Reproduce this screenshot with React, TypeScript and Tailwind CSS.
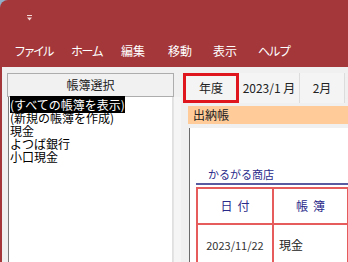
import React from 'react';

const jp = { fontFamily: '"Noto Sans CJK JP", "Noto Sans", sans-serif' };

const menus = [
  { label: 'ファイル', cls: 'w-[57px] tracking-[-2.5px]' },
  { label: 'ホーム', cls: 'w-[50px] tracking-[-1.5px]' },
  { label: '編集', cls: 'w-[47px]' },
  { label: '移動', cls: 'w-[45px]' },
  { label: '表示', cls: 'w-[45px]' },
  { label: 'ヘルプ', cls: 'w-[50px] tracking-[-1.5px]' },
];

const books = ['(すべての帳簿を表示)', '(新規の帳簿を作成)', '現金', 'よつば銀行', '小口現金'];

export default function App() {
  return (
    <div className="w-[348px] h-[262px] overflow-hidden bg-[#8fb0c8]" style={jp}>
      <div className="h-full rounded-tl-[8px] bg-[#a4373a] flex flex-col">
        {/* Title bar */}
        <div className="h-[36px] pl-[26px] pt-[15px]">
          <svg width="7" height="6" viewBox="0 0 7 6">
            <rect x="1" y="0" width="5" height="1" fill="#f3d6d6" />
            <path d="M1 2.5 L6 2.5 L3.5 5.5 Z" fill="#f3d6d6" />
          </svg>
        </div>

        {/* Menu bar */}
        <div className="h-[31px] flex items-center pl-[14px] pb-[1px] text-[12px] text-white">
          {menus.map((m) => (
            <span key={m.label} className={`${m.cls} whitespace-nowrap`}>
              {m.label}
            </span>
          ))}
        </div>

        {/* Body */}
        <div className="flex-1 min-h-0 pl-[2px] flex">
          <div className="flex-1 bg-[#f0f0f0] flex min-h-0">
            {/* Left panel */}
            <div className="w-[179px] flex flex-col pt-[6px]">
              <div className="ml-[5px] w-[167px] h-[24px] border border-[#adadad] bg-[#f1f1f1] flex items-center justify-center text-[12px] text-[#222]">
                帳簿選択
              </div>
              <div className="flex flex-1 min-h-0">
                <div className="ml-[6px] w-[166px] flex-1 bg-white border-l border-[#7a7a7a] border-r border-r-[#e0e0e0] pt-[1px] pl-[1px] text-[12px] leading-[13px] text-black">
                  {books.map((b, i) => (
                    <div key={b} className="whitespace-nowrap">
                      <span className={i === 0 ? 'bg-black text-white' : ''}>{b}</span>
                    </div>
                  ))}
                </div>
                <div className="w-[8px] bg-[#f5f5f5] border-l border-[#e4e4e4]" />
              </div>
            </div>

            {/* Right panel */}
            <div className="flex-1 flex flex-col pt-[6px] min-w-0">
              {/* Tabs */}
              <div className="h-[31px] flex items-stretch text-[12px] text-[#222]">
                <div className="ml-[2px] w-[56px] h-[30px] border-[3px] border-[#e0161e] bg-[#f4f4f4] flex items-center justify-center">
                  年度
                </div>
                <div className="w-[61px] h-[30px] flex items-center justify-center border-r border-[#dcdcdc] bg-[#f4f4f4]">
                  2023/1 月
                </div>
                <div className="w-[45px] h-[30px] flex items-center justify-center border-r border-[#dcdcdc] bg-[#f4f4f4]">
                  2月
                </div>
              </div>

              {/* Ledger header */}
              <div className="mt-[3px] ml-[7px] h-[18px] bg-[#ffcc99] flex items-center pl-[5px] text-[12px] text-[#222]">
                出納帳
              </div>

              {/* Sheet */}
              <div className="mt-[4px] ml-[8px] flex-1 bg-white border-l border-[#6b6b6b] pt-[38px] pl-[6px]">
                <div className="pl-[12px] text-[11px] leading-[16px] text-[#2a2a8a]">かるがる商店</div>
                <div className="mt-[1px] h-[2px] bg-[#5a5aa0]" />
                <div className="mt-[2px] border-t-2 border-l-2 border-[#e65c5c] text-[12px]">
                  <div className="flex h-[36px] border-b-2 border-[#e65c5c]">
                    <div className="w-[76px] border-r-2 border-[#e65c5c] flex items-center justify-center text-[#2a2a8a] tracking-[5px] pl-[5px]">
                      日付
                    </div>
                    <div className="w-[75px] border-r-2 border-[#e65c5c] flex items-center justify-center text-[#2a2a8a] tracking-[5px] pl-[5px]">
                      帳簿
                    </div>
                  </div>
                  <div className="flex h-[40px]">
                    <div className="w-[76px] border-r-2 border-[#e65c5c] flex items-center justify-center text-[11px] text-[#333]">
                      2023/11/22
                    </div>
                    <div className="w-[75px] border-r-2 border-[#e65c5c] flex items-center pl-[5px] text-[#222]">
                      現金
                    </div>
                  </div>
                </div>
              </div>
            </div>
          </div>
        </div>
      </div>
    </div>
  );
}
